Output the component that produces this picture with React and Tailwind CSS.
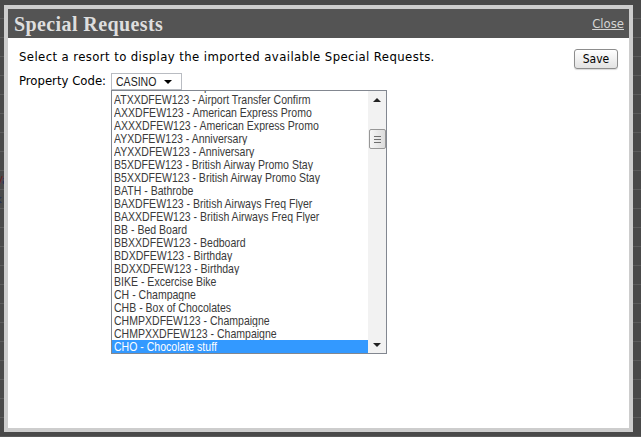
import React from 'react'

const items = [
  'ATXDFEW123 - Airport Transfer Confirm',
  'ATXXDFEW123 - Airport Transfer Confirm',
  'AXXDFEW123 - American Express Promo',
  'AXXXDFEW123 - American Express Promo',
  'AYXDFEW123 - Anniversary',
  'AYXXDFEW123 - Anniversary',
  'B5XDFEW123 - British Airway Promo Stay',
  'B5XXDFEW123 - British Airway Promo Stay',
  'BATH - Bathrobe',
  'BAXDFEW123 - British Airways Freq Flyer',
  'BAXXDFEW123 - British Airways Freq Flyer',
  'BB - Bed Board',
  'BBXXDFEW123 - Bedboard',
  'BDXDFEW123 - Birthday',
  'BDXXDFEW123 - Birthday',
  'BIKE - Excercise Bike',
  'CH - Champagne',
  'CHB - Box of Chocolates',
  'CHMPXDFEW123 - Champaigne',
  'CHMPXXDFEW123 - Champaigne',
  'CHO - Chocolate stuff',
]

const selected = 'CHO - Chocolate stuff'

// narrow list font (the original uses a condensed face)
const narrow = "inline-block origin-left scale-x-[0.81] text-[13px] leading-[13px] font-['Liberation_Sans',sans-serif]"

const Scrollbar = () => (
  <div className="w-[18px] bg-[#f2f2f2] flex flex-col items-center">
    {/* up arrow */}
    <div className="h-[17px] w-full flex items-center justify-center">
      <div className="w-0 h-0 border-l-[4px] border-r-[4px] border-b-[4px] border-l-transparent border-r-transparent border-b-[#222]" />
    </div>
    <div className="h-[21px]" />
    {/* thumb */}
    <div className="w-[17px] h-[20px] rounded-[2px] border border-[#979797] bg-gradient-to-r from-[#f6f6f6] to-[#dcdcdc] flex flex-col items-center justify-center gap-[2px]">
      <div className="w-[7px] h-px bg-[#6f6f6f]" />
      <div className="w-[7px] h-px bg-[#6f6f6f]" />
      <div className="w-[7px] h-px bg-[#6f6f6f]" />
    </div>
    <div className="flex-1" />
    {/* down arrow */}
    <div className="h-[17px] w-full flex items-center justify-center">
      <div className="w-0 h-0 border-l-[4px] border-r-[4px] border-t-[4px] border-l-transparent border-r-transparent border-t-[#222]" />
    </div>
  </div>
)

const ListBox = () => (
  <div className="w-[276px] h-[264px] border border-[#828790] bg-white flex">
    <div className="flex-1 overflow-hidden">
      <div className="mt-[-11px] flex flex-col">
        {items.map((item) => (
          <div
            key={item}
            className={`h-[13px] text-[13px] leading-[13px] pl-[2px] whitespace-nowrap overflow-hidden ${
              item === selected ? 'bg-[#3399ff] text-white' : 'text-[#3a3a3a]'
            }`}
          >
            <span className={narrow}>{item}</span>
          </div>
        ))}
      </div>
    </div>
    <Scrollbar />
  </div>
)

export default function App() {
  const rows = Array.from({ length: 23 })

  return (
    <div className="relative w-[641px] h-[437px] bg-[#494949] overflow-hidden font-['DejaVu_Sans_Condensed','DejaVu_Sans',sans-serif]">
      {/* page behind the overlay */}
      <div className="flex flex-col">
        {rows.map((_, i) => (
          <div key={i} className="h-[19px] border-b border-[#5b5b5b] text-[11px] leading-[19px]">
            {i === 9 && (
              <span className="ml-[-4px]">
                <span className="text-[#6a2020]">V</span>
                <span className="text-[#1c2a5a]">a</span>
              </span>
            )}
            {i === 10 && <span className="ml-[-4px] text-[#1c2a5a]">k</span>}
          </div>
        ))}
      </div>

      {/* dialog */}
      <div className="absolute left-[4px] top-[5px] w-[629px] h-[427px] bg-[#cdcdcd] p-[4px] flex flex-col">
        <div className="flex-1 bg-white flex flex-col">
          <div className="h-[29px] bg-[#545454] flex items-center justify-between pl-[6px] pr-[5px]">
            <span className="text-[20px] font-bold tracking-[0.4px] text-[#dedede] font-['Liberation_Serif',serif]">
              Special Requests
            </span>
            <a href="#" className="text-[13px] text-[#d4d4d4] underline">
              Close
            </a>
          </div>

          <div className="flex flex-col pl-[11px] pr-[11px] pt-[11px]">
            <div className="flex justify-between items-start">
              <p className="text-[13px] leading-[16px] tracking-[0.4px] text-black">
                Select a resort to display the imported available Special Requests.
              </p>
              <button className="w-[44px] h-[20px] rounded-[3px] border border-[#8d8d8d] bg-gradient-to-b from-white to-[#e2e2e2] text-[12px] text-black shadow-[0_1px_1px_rgba(0,0,0,0.15)]">
                Save
              </button>
            </div>

            <div className="flex mt-[4px]">
              <label className="w-[92px] h-[16px] leading-[16px] text-[13px] text-black">Property Code:</label>
              <div className="flex flex-col">
                <div className="w-[71px] h-[17px] border border-[#b9bcc2] flex items-center pl-[4px]">
                  <span className="w-[48px] h-[13px] text-[13px] leading-[13px] text-[#222]">
                    <span className={narrow}>CASINO</span>
                  </span>
                  <div className="w-0 h-0 border-l-[4px] border-r-[4px] border-t-[4px] border-l-transparent border-r-transparent border-t-black" />
                </div>
                <ListBox />
              </div>
            </div>
          </div>
        </div>
      </div>
    </div>
  )
}
